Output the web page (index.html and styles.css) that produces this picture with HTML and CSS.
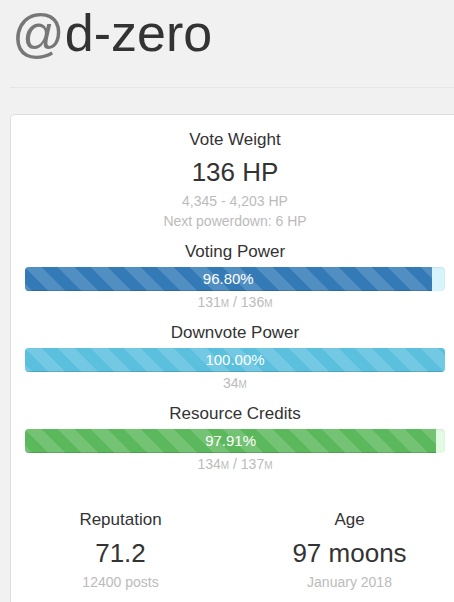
FILE: index.html
```html
<!DOCTYPE html>
<html lang="en">
<head>
<meta charset="utf-8">
<title>@d-zero</title>
<link rel="stylesheet" href="styles.css">
</head>
<body>
<div class="page">
  <header class="page-header">
    <h1 class="title"><span class="at">@</span>d-zero</h1>
  </header>
  <section class="card">
    <div class="weight">
      <div class="label">Vote Weight</div>
      <div class="big">136 HP</div>
      <div class="sub sub-first">4,345 - 4,203 HP</div>
      <div class="sub">Next powerdown: 6 HP</div>
    </div>

    <div class="meter">
      <div class="label">Voting Power</div>
      <div class="track track-blue">
        <div class="fill fill-blue" style="width: 96.80%">96.80%</div>
      </div>
      <div class="sub">131<small>M</small> / 136<small>M</small></div>
    </div>

    <div class="meter">
      <div class="label">Downvote Power</div>
      <div class="track track-cyan">
        <div class="fill fill-cyan" style="width: 100%">100.00%</div>
      </div>
      <div class="sub">34<small>M</small></div>
    </div>

    <div class="meter">
      <div class="label">Resource Credits</div>
      <div class="track track-green">
        <div class="fill fill-green" style="width: 97.91%">97.91%</div>
      </div>
      <div class="sub">134<small>M</small> / 137<small>M</small></div>
    </div>

    <div class="stats">
      <div class="stat">
        <div class="label">Reputation</div>
        <div class="big">71.2</div>
        <div class="sub sub-first">12400 posts</div>
      </div>
      <div class="stat">
        <div class="label">Age</div>
        <div class="big">97 moons</div>
        <div class="sub sub-first">January 2018</div>
      </div>
    </div>
  </section>
</div>
</body>
</html>
```

FILE: styles.css
```css
html {
  overflow: hidden;
}

body {
  margin: 0;
  background: #f1f1f1;
  font-family: "Liberation Sans", Arial, sans-serif;
  color: #333;
}

.page {
  width: 460px;
  padding-left: 10px;
  box-sizing: border-box;
}

.page-header {
  border-bottom: 1px solid #e6e6e6;
  padding-bottom: 24px;
}

.title {
  margin: 3px 0 0 0;
  padding-left: 2px;
  font-size: 52px;
  line-height: 60px;
  font-weight: normal;
  color: #333;
}

.title .at {
  color: #777;
}

.card {
  margin-top: 26px;
  width: 450px;
  box-sizing: border-box;
  background: #fff;
  border: 1px solid #ddd;
  border-radius: 4px;
  padding: 13px 14px 20px;
  text-align: center;
}

.label {
  font-size: 17px;
  line-height: 24px;
  color: #333;
}

.big {
  margin-top: 4px;
  font-size: 26px;
  line-height: 32px;
  color: #333;
}

.sub {
  font-size: 14px;
  line-height: 20px;
  height: 20px;
  color: #bbb;
}

.sub-first {
  margin-top: 3px;
}

.sub small {
  font-size: 10px;
  line-height: 10px;
}

.meter {
  margin-top: 9px;
}

.meter .sub {
  margin-top: 1px;
}

.track {
  margin-top: 3px;
  height: 24px;
  border-radius: 4px;
  overflow: hidden;
  box-shadow: inset 0 1px 2px rgba(0, 0, 0, 0.08);
  display: flex;
}

.track-blue { background: #d7f4fd; }
.track-cyan { background: #d7f4fd; }
.track-green { background: #e3fbe3; }

.fill {
  height: 24px;
  font-size: 15px;
  line-height: 24px;
  color: #fff;
  text-align: center;
  box-shadow: inset 0 -1px 0 rgba(0, 0, 0, 0.15);
  background-image: linear-gradient(45deg,
    rgba(255, 255, 255, 0.15) 25%, transparent 25%,
    transparent 50%, rgba(255, 255, 255, 0.15) 50%,
    rgba(255, 255, 255, 0.15) 75%, transparent 75%, transparent);
  background-size: 33px 33px;
}

.fill-blue { background-color: #337ab7; }
.fill-cyan { background-color: #5bc0de; }
.fill-green { background-color: #5cb85c; }

.stats {
  margin: 34px -19px 0;
  display: grid;
  grid-template-columns: 1fr 1fr;
}

.stats .big {
  margin-top: 5px;
}
```
